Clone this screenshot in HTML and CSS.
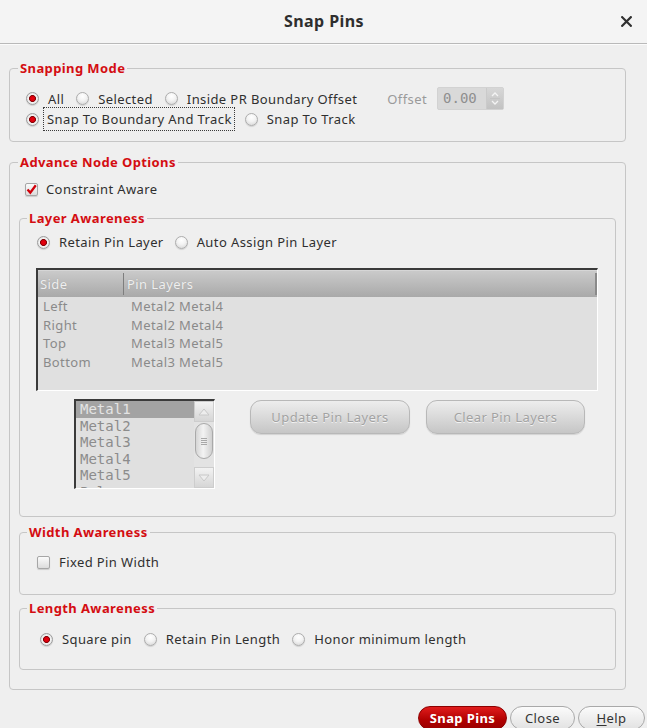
FILE: index.html
```html
<!DOCTYPE html>
<html>
<head>
<meta charset="utf-8">
<title>Snap Pins</title>
<link rel="stylesheet" href="styles.css">
</head>
<body>
<div class="dialog">
  <header class="titlebar">
    <span></span>
    <span class="title">Snap Pins</span>
    <span class="close">
      <svg width="11" height="11" viewBox="0 0 11 11"><path d="M1.2 1.2 L9.8 9.8 M9.8 1.2 L1.2 9.8" stroke="#303030" stroke-width="2.2" stroke-linecap="square"/></svg>
    </span>
  </header>

  <main class="content">
    <fieldset class="group g-snap">
      <legend>Snapping Mode</legend>
      <div class="snap-body">
        <div class="row r1">
          <label class="opt"><span class="radio on"></span>All</label>
          <label class="opt"><span class="radio"></span>Selected</label>
          <label class="opt"><span class="radio"></span>Inside PR Boundary Offset</label>
          <span class="offset-label">Offset</span>
          <span class="spin">
            <span class="spin-val">0.00</span>
            <span class="spin-btns">
              <svg width="16" height="21" viewBox="0 0 16 21"><path d="M5 8 L8 5 L11 8" fill="none" stroke="#f4f4f4" stroke-width="1.3"/><path d="M5 13 L8 16 L11 13" fill="none" stroke="#f4f4f4" stroke-width="1.3"/><path d="M3 10.5 H13" stroke="#c4c4c4" stroke-width="1"/></svg>
            </span>
          </span>
        </div>
        <div class="row r2">
          <label class="opt opt-focus"><span class="radio on"></span><span class="focus">Snap To Boundary And Track</span></label>
          <label class="opt"><span class="radio"></span>Snap To Track</label>
        </div>
      </div>
    </fieldset>

    <fieldset class="group g-adv">
      <legend>Advance Node Options</legend>
      <div class="adv-body">
        <label class="opt row-check">
          <span class="check">
            <svg width="13" height="13" viewBox="0 0 13 13"><path d="M2.5 6.5 L5.3 9.6 L10.8 2.2" fill="none" stroke="#d0000a" stroke-width="2.3" stroke-linejoin="miter"/></svg>
          </span>Constraint Aware
        </label>

        <fieldset class="group g-sub g-layer">
          <legend>Layer Awareness</legend>
          <div class="layer-body">
            <div class="row r-layer">
              <label class="opt"><span class="radio on"></span>Retain Pin Layer</label>
              <label class="opt"><span class="radio"></span>Auto Assign Pin Layer</label>
            </div>

            <div class="pin-table">
              <div class="pt-head">
                <span class="pt-c1">Side</span>
                <span class="pt-c2">Pin Layers</span>
              </div>
              <div class="pt-row"><span class="pt-c1">Left</span><span class="pt-c2">Metal2 Metal4</span></div>
              <div class="pt-row"><span class="pt-c1">Right</span><span class="pt-c2">Metal2 Metal4</span></div>
              <div class="pt-row"><span class="pt-c1">Top</span><span class="pt-c2">Metal3 Metal5</span></div>
              <div class="pt-row"><span class="pt-c1">Bottom</span><span class="pt-c2">Metal3 Metal5</span></div>
            </div>

            <div class="list-row">
              <div class="listbox">
                <div class="list-items">
                  <div class="li sel">Metal1</div>
                  <div class="li">Metal2</div>
                  <div class="li">Metal3</div>
                  <div class="li">Metal4</div>
                  <div class="li">Metal5</div>
                  <div class="li">Poly</div>
                </div>
                <div class="scrollbar">
                  <span class="sb-btn">
                    <svg width="18" height="20" viewBox="0 0 18 20"><path d="M4 13 L9 7 L14 13 Z" fill="#ededed" stroke="#c8c8c8" stroke-width="1"/></svg>
                  </span>
                  <span class="sb-track">
                    <span class="sb-thumb">
                      <svg width="10" height="10" viewBox="0 0 10 10"><path d="M2 2.5 H8 M2 4.5 H8 M2 6.5 H8 M2 8.5 H8" stroke="#a8a8a8" stroke-width="1"/></svg>
                    </span>
                  </span>
                  <span class="sb-btn">
                    <svg width="18" height="20" viewBox="0 0 18 20"><path d="M4 7 L9 13 L14 7 Z" fill="#ededed" stroke="#c8c8c8" stroke-width="1"/></svg>
                  </span>
                </div>
              </div>
              <div class="btn-pair">
                <span class="btn-dis btn-update">Update Pin Layers</span>
                <span class="btn-dis btn-clear">Clear Pin Layers</span>
              </div>
            </div>
          </div>
        </fieldset>

        <fieldset class="group g-sub g-width">
          <legend>Width Awareness</legend>
          <div class="width-body">
            <label class="opt"><span class="check"></span>Fixed Pin Width</label>
          </div>
        </fieldset>

        <fieldset class="group g-sub g-length">
          <legend>Length Awareness</legend>
          <div class="length-body">
            <div class="row r-length">
              <label class="opt"><span class="radio on"></span>Square pin</label>
              <label class="opt"><span class="radio"></span>Retain Pin Length</label>
              <label class="opt"><span class="radio"></span>Honor minimum length</label>
            </div>
          </div>
        </fieldset>
      </div>
    </fieldset>

    <div class="btn-bar">
      <span class="btn btn-primary">Snap Pins</span>
      <span class="btn btn-close">Close</span>
      <span class="btn btn-help"><u>H</u>elp</span>
    </div>
  </main>
</div>
</body>
</html>
```

FILE: styles.css
```css
* { box-sizing: border-box; }
html, body { margin: 0; padding: 0; }
body {
  width: 647px;
  height: 728px;
  overflow: hidden;
  background: #efefef;
  font-family: "Noto Sans", "Open Sans", sans-serif;
  font-size: 13px;
  letter-spacing: 0.4px;
  color: #2f2f2f;
}
.dialog { display: flex; flex-direction: column; height: 728px; }

/* title bar */
.titlebar {
  height: 44px;
  flex: none;
  display: grid;
  grid-template-columns: 1fr auto 1fr;
  align-items: center;
  background: #f4f4f4;
  border-bottom: 1px solid #b9b9b9;
  box-shadow: 0 1px 0 #fbfbfb;
}
.title { font-size: 16px; font-weight: bold; color: #2e2e2e; padding-bottom: 1px; padding-left: 1px; }
.close { justify-self: end; margin-right: 15px; display: flex; }

/* content */
.content { padding: 15px 0 0 9px; }

.group {
  margin: 0;
  padding: 0;
  min-width: 0;
  border: 1px solid #c6c6c6;
  border-radius: 4px;
}
.group > legend {
  margin-left: 8px;
  padding: 0 2px;
  font-weight: bold;
  font-size: 13px;
  line-height: 18px;
  color: #d40d12;
}
.g-sub > legend { margin-left: 7px; }

.row { display: flex; align-items: center; }
.opt { display: flex; align-items: center; white-space: nowrap; }

.radio {
  flex: none;
  width: 13px;
  height: 13px;
  margin-right: 9px;
  border-radius: 50%;
  border: 1px solid #adadad;
  background: radial-gradient(circle at 50% 30%, #ffffff 0%, #f3f3f3 45%, #d2d2d2 100%);
  box-shadow: 0 1px 1px rgba(0,0,0,0.12);
}
.radio.on {
  border-color: #9c9c9c;
  background: radial-gradient(circle at 50% 50%, #ee0010 0, #d4000c 2.2px, #7c0004 3.1px, #f6f6f6 3.8px, #ececec 60%, #d0d0d0 100%);
}
.check {
  flex: none;
  width: 13px;
  height: 13px;
  margin-right: 8px;
  border: 1px solid #a6a6a6;
  border-radius: 2px;
  background: linear-gradient(#fbfbfb, #dcdcdc);
  box-shadow: 0 1px 1px rgba(0,0,0,0.15);
  display: flex;
  align-items: center;
  justify-content: center;
}
.check svg { margin: -1px; }

/* snapping mode */
.g-snap { width: 617px; }
.snap-body { padding: 10px 0 10px 16px; }
.r1 { height: 23px; gap: 12px; }
.r2 { height: 24px; margin-top: -3px; gap: 10px; }
.offset-label { color: #9a9a9a; margin-left: 18px; }
.spin {
  display: flex;
  width: 67px;
  height: 23px;
  margin-left: -2px;
  background: #d9d9d9;
  border: 1px solid #d2d2d2;
  border-radius: 2px;
  letter-spacing: 0;
}
.spin-val {
  flex: 1;
  font-family: "DejaVu Sans Mono", monospace;
  font-size: 14px;
  line-height: 21px;
  color: #8f8f8f;
  padding-left: 5px;
}
.spin-btns {
  width: 17px;
  display: flex;
  background: linear-gradient(#d7d7d7, #c2c2c2);
  border-left: 1px solid #cacaca;
}
.opt-focus .radio { margin-right: 4px; }
.focus {
  border: 1px dotted #3a3a3a;
  padding: 2px 2px 2px 3px;
  line-height: 18px;
}

/* advance node options */
.g-adv { width: 617px; margin-top: 11px; }
.adv-body { padding: 8px 9px 19px 9px; }
.row-check { height: 20px; margin-left: 6px; }
.g-layer { margin-top: 10px; }
.layer-body { padding: 5px 17px 27px 16px; }
.r-layer { height: 20px; margin-left: 1px; gap: 11px; }

.pin-table {
  margin-top: 16px;
  height: 123px;
  background: #e0e0e0;
  border-top: 2px solid #3a3a3a;
  border-left: 2px solid #3a3a3a;
  border-right: 1px solid #ffffff;
  border-bottom: 1px solid #ffffff;
}
.pt-head {
  display: flex;
  height: 27px;
  align-items: center;
  background: linear-gradient(#cacaca, #a9a9a9);
  border-top: 1px solid #d6d6d6;
  color: #efefef;
  text-shadow: 0 0 1px #9a9a9a;
}
.pt-head .pt-c1 {
  width: 86px;
  padding-left: 2px;
  align-self: stretch;
  display: flex;
  align-items: center;
  border-right: 1px solid #7e7e7e;
  margin: 2px 0;
}
.pt-head .pt-c2 { padding-left: 3px; flex: 1; align-self: stretch; display: flex; align-items: center; border-right: 2px solid #8a8a8a; margin: 2px 0; }
.pt-row { display: flex; height: 18.7px; line-height: 18.7px; color: #8a8a8a; }
.pt-row .pt-c1 { width: 88px; padding-left: 5px; }
.pt-row .pt-c2 { padding-left: 5px; }

.list-row { display: flex; align-items: flex-start; margin-top: 8px; }
.listbox {
  display: flex;
  width: 141px;
  height: 90px;
  margin-left: 38px;
  background: #e0e0e0;
  border-top: 2px solid #3a3a3a;
  border-left: 2px solid #3a3a3a;
  border-right: 1px solid #ffffff;
  border-bottom: 1px solid #ffffff;
  overflow: hidden;
}
.list-items {
  width: 118px;
  font-family: "DejaVu Sans Mono", monospace;
  font-size: 14px;
  letter-spacing: 0;
  color: #8c8c8c;
  overflow: hidden;
}
.li { height: 16.5px; line-height: 16.5px; padding-left: 4px; }
.li.sel { background: #a3a3a3; color: #e4e4e4; }
.scrollbar {
  width: 20px;
  display: flex;
  flex-direction: column;
  background: #e3e3e3;
}
.sb-btn {
  height: 21px;
  flex: none;
  display: flex;
  align-items: center;
  justify-content: center;
  background: linear-gradient(#f2f2f2, #d6d6d6);
  border: 1px solid #cdcdcd;
}
.sb-track { flex: 1; display: flex; flex-direction: column; padding: 1px 1px 8px; }
.sb-thumb {
  flex: 1;
  border-radius: 9px;
  border: 1px solid #a9a9a9;
  background: linear-gradient(90deg, #d5d5d5, #f3f3f3 45%, #d0d0d0);
  display: flex;
  align-items: center;
  justify-content: center;
}

.btn-pair { display: flex; gap: 16px; margin-left: 35px; margin-top: 1px; }
.btn-dis {
  height: 34px;
  display: flex;
  align-items: center;
  justify-content: center;
  border-radius: 11px;
  border: 1px solid #b8b8b8;
  background: linear-gradient(#ededed, #c6c6c6);
  box-shadow: 0 1px 1px rgba(0,0,0,0.12);
  color: #a2a2a2;
  text-shadow: 0 1px 0 #f2f2f2;
}
.btn-update { width: 160px; }
.btn-clear { width: 159px; }

.g-width { margin-top: 6px; }
.width-body { padding: 11px 0 22px 17px; height: 53px; }
.width-body .opt { height: 20px; }
.width-body .check { margin-right: 9px; }

.g-length { margin-top: 4px; }
.length-body { padding: 12px 0 20px 20px; }
.r-length { height: 20px; gap: 12px; }

/* bottom buttons */
.btn-bar {
  display: flex;
  justify-content: flex-end;
  gap: 3px;
  margin-top: 16px;
  padding-right: 2px;
}
.btn {
  height: 24px;
  display: flex;
  align-items: center;
  justify-content: center;
  border-radius: 12px;
  font-size: 13px;
}
.btn-primary {
  width: 89px;
  color: #ffffff;
  font-weight: bold;
  background: linear-gradient(#e01c1c, #b00000 60%, #9a0000);
  border: 1px solid #8c0000;
}
.btn-close, .btn-help {
  color: #333333;
  background: linear-gradient(#fbfbfb, #e2e2e2);
  border: 1px solid #a9a9a9;
}
.btn-close { width: 65px; }
.btn-help { width: 67px; }
.btn-help u { text-decoration-thickness: 1px; text-underline-offset: 2px; }
```
